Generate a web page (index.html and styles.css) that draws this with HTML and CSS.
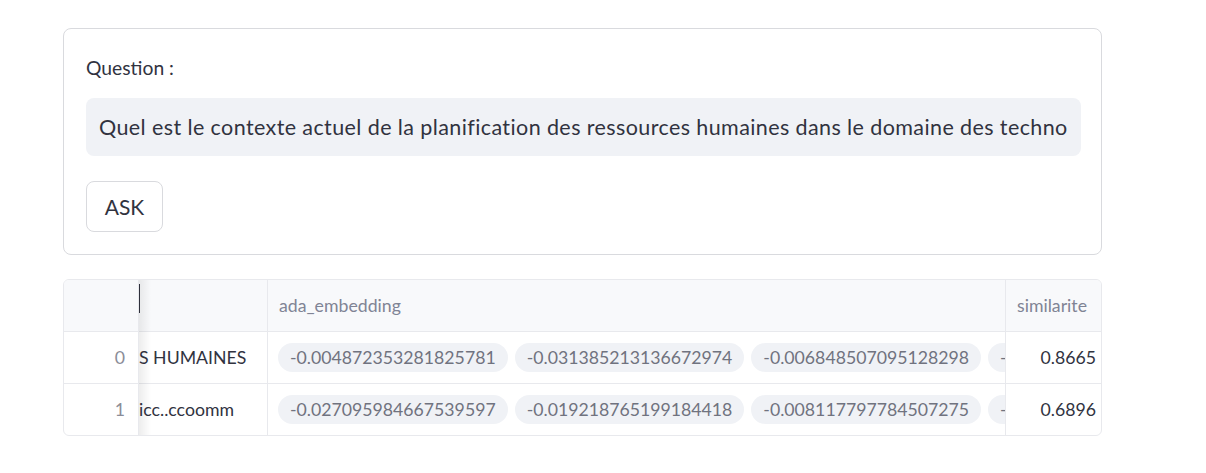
FILE: index.html
```html
<!DOCTYPE html>
<html lang="fr">
<head>
<meta charset="utf-8">
<title>Question</title>
<link rel="stylesheet" href="styles.css">
</head>
<body>
<main class="page">
  <form class="form-box">
    <label class="label" for="q">Question :</label>
    <div class="input-wrap">
      <input id="q" class="text-input" type="text" value="Quel est le contexte actuel de la planification des ressources humaines dans le domaine des technologies de l'information ?">
    </div>
    <button type="button" class="btn">ASK</button>
  </form>

  <div class="grid">
    <div class="row head">
      <div class="cell idx"></div>
      <div class="cell c1"><span class="cursor"></span></div>
      <div class="cell c2 hd">ada_embedding</div>
      <div class="cell c3 hd">similarite</div>
    </div>
    <div class="row">
      <div class="cell idx num">0</div>
      <div class="cell c1 txt">S HUMAINES</div>
      <div class="cell c2 pills">
        <span class="pill">-0.004872353281825781</span>
        <span class="pill">-0.031385213136672974</span>
        <span class="pill">-0.006848507095128298</span>
        <span class="pill">-0.0</span>
      </div>
      <div class="cell c3 val">0.8665</div>
    </div>
    <div class="row last">
      <div class="cell idx num">1</div>
      <div class="cell c1 txt">icc..ccoomm</div>
      <div class="cell c2 pills">
        <span class="pill">-0.027095984667539597</span>
        <span class="pill">-0.019218765199184418</span>
        <span class="pill">-0.008117797784507275</span>
        <span class="pill">-0.0</span>
      </div>
      <div class="cell c3 val">0.6896</div>
    </div>
    <div class="shadow"></div>
  </div>
</main>
</body>
</html>
```

FILE: styles.css
```css
* { box-sizing: border-box; }
html, body { margin: 0; padding: 0; background: #ffffff; }
body {
  font-family: Lato, "Liberation Sans", sans-serif;
  color: #31333f;
}
.page {
  padding: 28px 0 0 63px;
  width: 1102px;
  box-sizing: content-box;
}
.form-box {
  width: 1039px;
  height: 227px;
  margin: 0;
  border: 1px solid #d9dade;
  border-radius: 8px;
  padding: 26px 20px 0 22px;
  display: flex;
  flex-direction: column;
  align-items: flex-start;
}
.label {
  font-size: 19.3px;
  line-height: 26px;
  height: 26px;
  color: #31333f;
}
.input-wrap {
  margin-top: 17px;
  width: 995px;
  height: 58px;
  background: #f0f2f6;
  border-radius: 8px;
  display: flex;
  align-items: center;
  padding: 0 13px;
  overflow: hidden;
}
.text-input {
  border: 0;
  outline: 0;
  background: transparent;
  width: 100%;
  padding: 0;
  margin: 0;
  font-family: Lato, "Liberation Sans", sans-serif;
  font-size: 21.5px;
  letter-spacing: 0.4px;
  color: #31333f;
}
.btn {
  margin-top: 25px;
  width: 77px;
  height: 51px;
  border: 1px solid #d9dade;
  border-radius: 8px;
  background: #fff;
  font-family: Lato, "Liberation Sans", sans-serif;
  font-size: 21px;
  color: #31333f;
  padding: 0;
}

.grid {
  position: relative;
  margin-top: 24px;
  width: 1039px;
  border: 1px solid #e8e9ed;
  border-radius: 6px;
  overflow: hidden;
  font-size: 17.7px;
}
.row {
  display: grid;
  grid-template-columns: 75px 129px 738px 95px;
  height: 52px;
  border-bottom: 1px solid #e8e9ed;
}
.row.last { border-bottom: 0; height: 51px; }
.row.head { background: #f8f9fb; }
.cell {
  display: flex;
  align-items: center;
  white-space: nowrap;
  overflow: hidden;
  border-right: 1px solid #e8e9ed;
}
.cell.c3 { border-right: 0; }
.hd { color: #808495; padding-left: 11px; }
.c1 { position: relative; }
.cursor {
  position: absolute;
  left: -1px;
  top: 4px;
  width: 2px;
  height: 29px;
  background: #31333f;
}
.num {
  justify-content: flex-end;
  padding-right: 13px;
  color: #8b8d98;
}
.txt { padding-left: 0; color: #31333f; }
.pills { gap: 7px; padding-left: 10px; }
.pill {
  flex: none;
  height: 29px;
  line-height: 29px;
  padding: 0 12px;
  border-radius: 15px;
  background: #f0f2f6;
  color: #70737f;
}
.val { justify-content: flex-end; padding-right: 5px; color: #31333f; }
.shadow {
  position: absolute;
  left: 75px;
  top: 0;
  bottom: 0;
  width: 12px;
  background: linear-gradient(to right, rgba(0,0,0,0.07), rgba(0,0,0,0));
  pointer-events: none;
}
```
